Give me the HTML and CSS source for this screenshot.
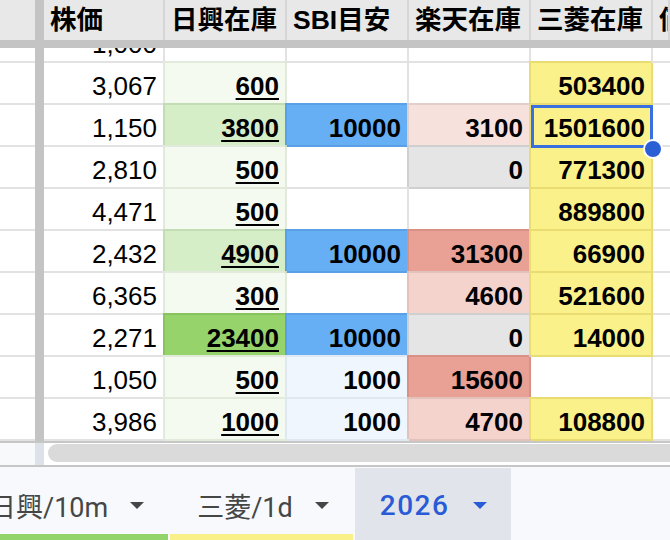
FILE: index.html
```html
<!DOCTYPE html>
<html lang="ja">
<head>
<meta charset="utf-8">
<title>Sheet</title>
<link rel="stylesheet" href="styles.css">
</head>
<body>
<div class="app">
  <div class="row head">
    <div class="h h0"></div>
    <div class="fz"></div>
    <div class="h">株価</div>
    <div class="h">日興在庫</div>
    <div class="h">SBI目安</div>
    <div class="h">楽天在庫</div>
    <div class="h">三菱在庫</div>
    <div class="h">価格</div>
  </div>
  <div class="hfz"></div>
  <div class="data">
    <div class="row partial">
      <div class="c c0"></div><div class="fz"></div>
      <div class="c">1,000</div><div class="c"></div><div class="c"></div><div class="c"></div><div class="c"></div><div class="c cl"></div>
    </div>
    <div class="row">
      <div class="c c0"></div><div class="fz"></div>
      <div class="c">3,067</div>
      <div class="c n g1"><span class="lk">600</span></div>
      <div class="c n"></div>
      <div class="c n"></div>
      <div class="c n y">503400</div>
      <div class="c cl"></div>
    </div>
    <div class="row">
      <div class="c c0"></div><div class="fz"></div>
      <div class="c">1,150</div>
      <div class="c n g2"><span class="lk">3800</span></div>
      <div class="c n b1">10000</div>
      <div class="c n p1">3100</div>
      <div class="c n y sel">1501600<span class="selbox"></span><span class="handle"></span></div>
      <div class="c cl"></div>
    </div>
    <div class="row">
      <div class="c c0"></div><div class="fz"></div>
      <div class="c">2,810</div>
      <div class="c n g1"><span class="lk">500</span></div>
      <div class="c n"></div>
      <div class="c n gr">0</div>
      <div class="c n y">771300</div>
      <div class="c cl"></div>
    </div>
    <div class="row">
      <div class="c c0"></div><div class="fz"></div>
      <div class="c">4,471</div>
      <div class="c n g1"><span class="lk">500</span></div>
      <div class="c n"></div>
      <div class="c n"></div>
      <div class="c n y">889800</div>
      <div class="c cl"></div>
    </div>
    <div class="row">
      <div class="c c0"></div><div class="fz"></div>
      <div class="c">2,432</div>
      <div class="c n g2"><span class="lk">4900</span></div>
      <div class="c n b1">10000</div>
      <div class="c n p3">31300</div>
      <div class="c n y">66900</div>
      <div class="c cl"></div>
    </div>
    <div class="row">
      <div class="c c0"></div><div class="fz"></div>
      <div class="c">6,365</div>
      <div class="c n g1"><span class="lk">300</span></div>
      <div class="c n"></div>
      <div class="c n p2">4600</div>
      <div class="c n y">521600</div>
      <div class="c cl"></div>
    </div>
    <div class="row">
      <div class="c c0"></div><div class="fz"></div>
      <div class="c">2,271</div>
      <div class="c n g3"><span class="lk">23400</span></div>
      <div class="c n b1">10000</div>
      <div class="c n gr">0</div>
      <div class="c n y">14000</div>
      <div class="c cl"></div>
    </div>
    <div class="row">
      <div class="c c0"></div><div class="fz"></div>
      <div class="c">1,050</div>
      <div class="c n g1"><span class="lk">500</span></div>
      <div class="c n b0">1000</div>
      <div class="c n p3">15600</div>
      <div class="c n"></div>
      <div class="c cl"></div>
    </div>
    <div class="row">
      <div class="c c0"></div><div class="fz"></div>
      <div class="c">3,986</div>
      <div class="c n g1"><span class="lk">1000</span></div>
      <div class="c n b0">1000</div>
      <div class="c n p2">4700</div>
      <div class="c n y">108800</div>
      <div class="c cl"></div>
    </div>
  </div>
  <div class="hscroll">
    <div class="hs0"></div>
    <div class="hsfz"></div>
    <div class="track"><div class="thumb"></div></div>
  </div>
  <div class="tabbar">
    <div class="strip">
      <div class="tab t-green"><span class="tl">日興/10m</span><svg class="dd" width="14" height="7" viewBox="0 0 14 7"><polygon points="0,0 14,0 7,7"/></svg></div>
      <div class="tab t-yellow"><span class="tl">三菱/1d</span><svg class="dd" width="14" height="7" viewBox="0 0 14 7"><polygon points="0,0 14,0 7,7"/></svg></div>
      <div class="tab active"><span class="tl">2026</span><svg class="dd" width="14" height="7" viewBox="0 0 14 7"><polygon points="0,0 14,0 7,7"/></svg></div>
    </div>
  </div>
</div>
</body>
</html>
```

FILE: styles.css
```css
* { box-sizing: border-box; margin: 0; padding: 0; }
html, body { width: 670px; height: 540px; overflow: hidden; background: #fff; }
body { font-family: "Liberation Sans", Arial, "Noto Sans CJK JP", sans-serif; color: #000; }

.app { width: 670px; height: 540px; overflow: hidden; }

.row {
  display: grid;
  grid-template-columns: 35px 9px 121px 122px 122px 122px 122px 1fr;
  height: 42px;
}

.fz { background: #c4c4c4; }

/* header */
.head { height: 40px; }
.h {
  background: #e8e8e8;
  border-right: 2px solid #d6d6d6;
  font-family: "Liberation Sans", Arial, "Noto Sans CJK JP", sans-serif;
  font-weight: bold;
  font-size: 26.5px;
  line-height: 40px;
  padding-left: 6px;
  white-space: nowrap;
  overflow: hidden;
}
.h0 { border-right: none; }
.hfz { height: 8px; background: #c4c4c4; }

/* data */
.data { height: 393px; overflow: hidden; }
.partial { margin-top: -27px; }

.c {
  border-right: 2px solid #e2e2e2;
  border-bottom: 2px solid #e2e2e2;
  display: flex;
  align-items: flex-end;
  justify-content: flex-end;
  padding: 0 6px 4px 0;
  font-size: 26px;
  line-height: 26px;
  white-space: nowrap;
  --bd: #e2e2e2;
}
.c0 { border-right: none; }
.cl { border-right: none; }
.n { font-weight: bold; }
.lk { text-decoration: underline; text-decoration-thickness: 2px; text-underline-offset: 3px; }

.g1, .g2, .g3, .b0, .b1, .p1, .p2, .p3, .gr, .y {
  border-color: var(--bd);
  box-shadow: -2px -2px 0 0 var(--bd);
}
.g1 { background: #f5faf1; --bd: #e2eadc; }
.g2 { background: #d5eec7; --bd: #c2dcb3; }
.g3 { background: #96d46b; --bd: #88c35e; }
.b0 { background: #eff6fe; --bd: #dfe7f0; }
.b1 { background: #66aff5; --bd: #5aa0e6; }
.p1 { background: #f7e1dd; --bd: #e2cfcb; }
.p2 { background: #f4d3cd; --bd: #e3c2bc; }
.p3 { background: #e8a194; --bd: #d89184; }
.gr { background: #e5e5e5; --bd: #cfcfcf; }
.y  { background: #fbf18a; --bd: #e8dc72; }

.sel { position: relative; }
.selbox {
  position: absolute;
  top: 0; left: 0; right: -2px; bottom: -3px;
  border: 3px solid #3a6fdf;
}
.handle {
  position: absolute;
  width: 20px; height: 20px;
  right: -12px; bottom: -14px;
  border-radius: 50%;
  background: #2a5fd6;
  border: 2px solid #fff;
}

/* horizontal scrollbar */
.hscroll {
  display: grid;
  grid-template-columns: 35px 9px 1fr;
  height: 26px;
  border-top: 2px solid #c6c6c6;
  border-bottom: 2px solid #c6c6c6;
}
.hs0 { background: #f8f9fa; }
.hsfz { background: #dde2e9; }
.track { background: #fff; overflow: hidden; padding-top: 1px; }
.thumb {
  margin-left: 4px;
  width: calc(100% + 20px);
  height: 18px;
  border-radius: 9px;
  background: #dadada;
}

/* sheet tabs */
.tabbar { height: 73px; background: #f8f9fc; padding-top: 1px; overflow: hidden; }
.strip { display: flex; gap: 2px; margin-left: -38px; height: 72px; }
.tab {
  display: flex;
  align-items: center;
  gap: 22px;
  height: 72px;
  padding: 8px 24px 0 27px;
  border-bottom: 6px solid transparent;
  font-family: Roboto, "Noto Sans CJK JP", sans-serif;
  font-size: 27px;
  color: #444746;
  white-space: nowrap;
  flex: none;
}
.dd { fill: #444746; flex: none; }
.t-green { border-bottom-color: #93d46a; }
.t-yellow { border-bottom-color: #faf08a; }
.active {
  background: #e1e5eb;
  color: #2a5bd6;
  font-size: 28px;
  font-weight: 500;
  letter-spacing: 1.5px;
  gap: 24px;
  padding-left: 25px;
  padding-right: 24px;
}
.active .dd { fill: #2a5bd6; }
```
